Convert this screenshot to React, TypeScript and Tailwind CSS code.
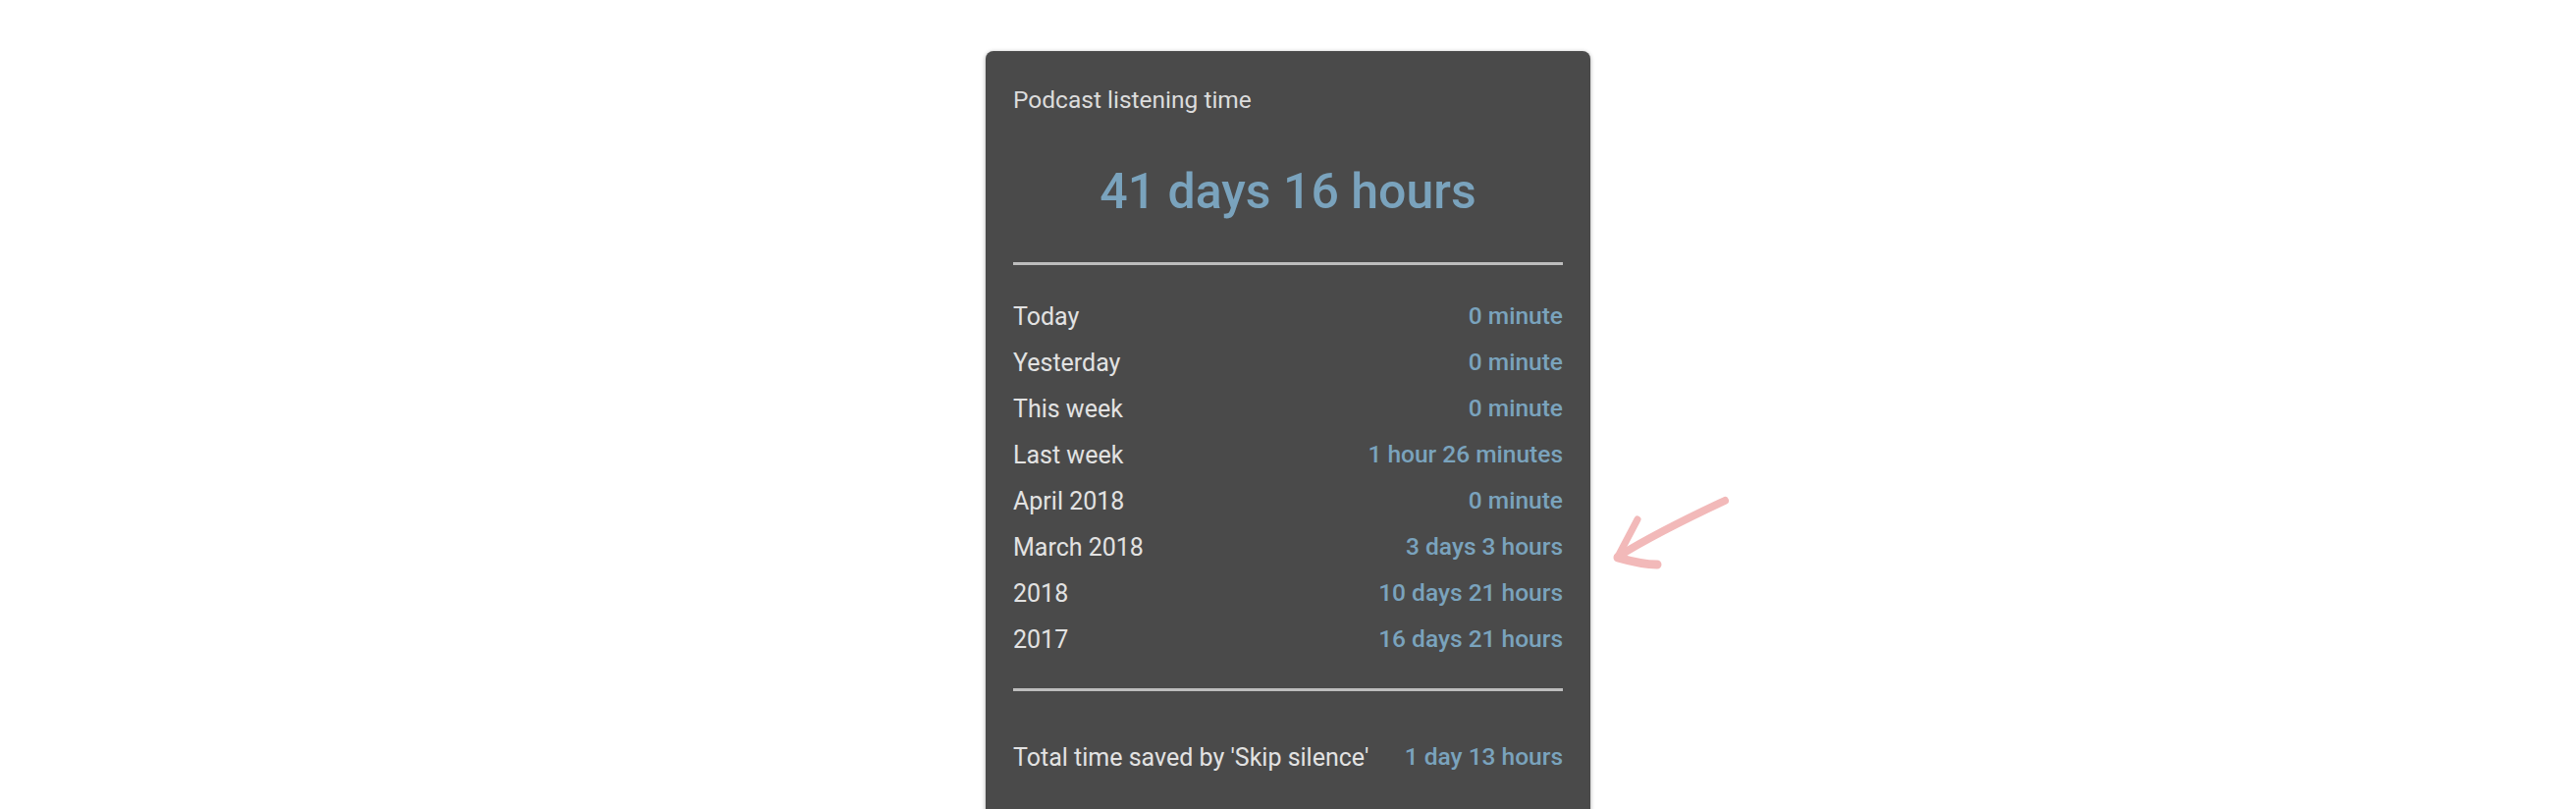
import React from "react";

const rows: { label: string; value: string }[] = [
  { label: "Today", value: "0 minute" },
  { label: "Yesterday", value: "0 minute" },
  { label: "This week", value: "0 minute" },
  { label: "Last week", value: "1 hour 26 minutes" },
  { label: "April 2018", value: "0 minute" },
  { label: "March 2018", value: "3 days 3 hours" },
  { label: "2018", value: "10 days 21 hours" },
  { label: "2017", value: "16 days 21 hours" },
];

function Arrow() {
  return (
    <svg
      className="absolute left-[1630px] top-[495px]"
      width="140"
      height="95"
      viewBox="0 0 140 95"
      fill="none"
    >
      <g stroke="#f2b9b9" strokeLinecap="round" strokeLinejoin="round">
        <path d="M127 15 C 95 30, 50 52, 18 72" strokeWidth="8" />
        <path d="M18 72 L 38 34" strokeWidth="7" />
        <path d="M18 73 C 32 77, 46 80, 58 80" strokeWidth="9" />
      </g>
    </svg>
  );
}

export default function App() {
  return (
    <div className="relative w-full h-[824px] overflow-hidden bg-white font-['Roboto',sans-serif]">
      <div className="flex justify-center pt-[52px]">
        <div className="w-[616px] rounded-[8px] bg-[#4a4a4a] px-[28px] pt-[34px] pb-[80px] shadow-[0_1px_4px_rgba(0,0,0,0.35)]">
          <div className="text-[24.5px] leading-[32px] text-[#dcdcdc]">Podcast listening time</div>
          <div className="mt-[47px] text-center text-[50px] leading-[60px] font-medium text-[#7aa3bd]">
            41 days 16 hours
          </div>
          <div className="mt-[42px] h-[3px] bg-[#bdbdbd]" />

          <div className="mt-[29px] flex flex-col">
            {rows.map((row) => (
              <div key={row.label} className="flex h-[47px] items-center justify-between">
                <span className="text-[25px] text-[#e2e2e2]">{row.label}</span>
                <span className="text-[24.5px] font-medium text-[#7aa3bd]">{row.value}</span>
              </div>
            ))}
          </div>

          <div className="mt-[26px] h-[3px] bg-[#bdbdbd]" />

          <div className="mt-[44px] flex h-[47px] items-center justify-between">
            <span className="text-[25px] text-[#e2e2e2]">Total time saved by 'Skip silence'</span>
            <span className="text-[24.5px] font-medium text-[#7aa3bd]">1 day 13 hours</span>
          </div>
        </div>
      </div>
      <Arrow />
    </div>
  );
}
